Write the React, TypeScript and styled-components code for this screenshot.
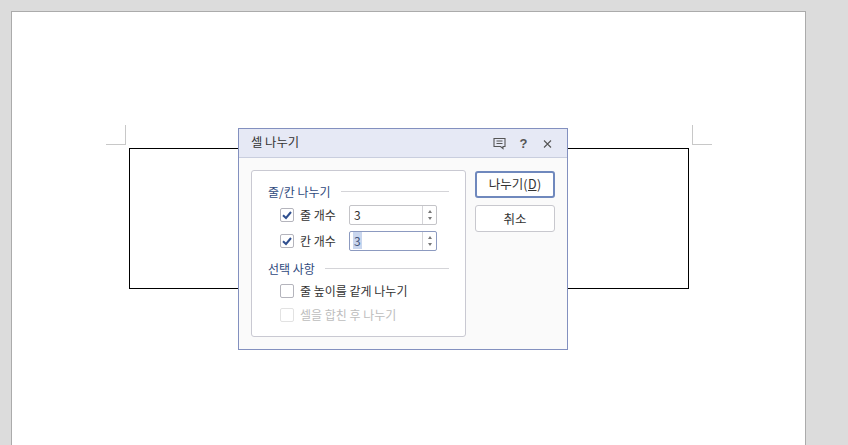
import styled, { createGlobalStyle } from "styled-components";

const colors = {
  desk: "#dcdcdc",
  pageEdge: "#ababab",
  crop: "#c8c8c8",
  frame: "#8390bf",
  titleBg: "#e6e9f5",
  titleLine: "#c9cede",
  bodyBg: "#fafafa",
  panelLine: "#c9c9d2",
  heading: "#2f4a7d",
  text: "#333333",
  muted: "#bdbdbd",
  focus: "#6f88bd",
};

const GlobalStyle = createGlobalStyle`
  html, body {
    margin: 0;
    padding: 0;
    height: 445px;
    overflow: hidden;
    background: ${colors.desk};
  }
  * {
    box-sizing: border-box;
  }
`;

const Desk = styled.div`
  position: relative;
  width: 848px;
  height: 445px;
  padding: 11px 0 0 11px;
  overflow: hidden;
  font-family: "Noto Sans CJK KR", "Noto Sans", sans-serif;
  font-size: 12px;
  color: ${colors.text};
`;

const Page = styled.div`
  width: 795px;
  height: 450px;
  padding: 136px 0 0 117px;
  background: #fff;
  border: 1px solid ${colors.pageEdge};
  border-bottom: none;
`;

const TableBox = styled.div`
  position: relative;
  width: 560px;
  height: 141px;
  border: 1px solid #000;
`;

const CropMark = styled.span<{ $side: "left" | "right" }>`
  position: absolute;
  top: -24px;
  width: 20px;
  height: 20px;
  border-bottom: 1px solid ${colors.crop};
  ${(p) =>
    p.$side === "left"
      ? `left: -24px; border-right: 1px solid ${colors.crop};`
      : `right: -24px; border-left: 1px solid ${colors.crop};`}
`;

const Dialog = styled.div`
  position: absolute;
  left: 238px;
  top: 128px;
  width: 330px;
  height: 222px;
  display: flex;
  flex-direction: column;
  background: ${colors.bodyBg};
  border: 1px solid ${colors.frame};
`;

const TitleBar = styled.div`
  height: 29px;
  display: flex;
  align-items: center;
  padding: 0 13px 0 12px;
  background: ${colors.titleBg};
  border-bottom: 1px solid ${colors.titleLine};
`;

const Title = styled.div`
  flex: 1;
  margin-top: -2px;
  font-size: 12.3px;
  color: #333;
`;

const TitleIcons = styled.div`
  display: flex;
  align-items: center;
  gap: 11px;
`;

const TitleIcon = styled.svg`
  display: block;
  width: 13px;
  height: 13px;
  fill: none;
  stroke: #555;
  stroke-width: 1.1;
`;

const HelpMark = styled.span`
  width: 13px;
  text-align: center;
  font-family: "Liberation Sans", sans-serif;
  font-size: 13px;
  font-weight: 700;
  line-height: 13px;
  color: #555;
`;

const DialogBody = styled.div`
  flex: 1;
  display: flex;
  gap: 9px;
  padding: 12px;
`;

const Panel = styled.div`
  width: 215px;
  height: 167px;
  padding: 11px 16px 0 16px;
  background: #fff;
  border: 1px solid ${colors.panelLine};
  border-radius: 3px;
`;

const GroupTitle = styled.div<{ $spaced?: boolean }>`
  display: flex;
  align-items: center;
  gap: 10px;
  height: 18px;
  margin-top: ${(p) => (p.$spaced ? "5px" : "0")};
  margin-bottom: 2px;
  font-size: 12px;
  color: ${colors.heading};

  &::after {
    content: "";
    flex: 1;
    height: 1px;
    background: #d4d4d8;
  }
`;

const Row = styled.div<{ $tall?: boolean }>`
  display: flex;
  align-items: center;
  height: ${(p) => (p.$tall ? "24px" : "26px")};
  padding-left: 12px;
`;

const Box = styled.span<{ $disabled?: boolean }>`
  width: 14px;
  height: 14px;
  flex: none;
  display: flex;
  align-items: center;
  justify-content: center;
  background: #fff;
  border: 1px solid ${(p) => (p.$disabled ? "#e2e2e2" : "#b4b4bc")};
  border-radius: 2px;
`;

const CheckMark = styled.svg`
  width: 10px;
  height: 10px;
  fill: none;
  stroke: #2f4f8f;
  stroke-width: 2;
`;

const RowLabel = styled.span<{ $disabled?: boolean }>`
  margin: -1px 0 0 6px;
  font-size: 12px;
  color: ${(p) => (p.$disabled ? colors.muted : colors.text)};
`;

const Spinner = styled.div<{ $focused?: boolean }>`
  width: 88px;
  height: 20px;
  margin-left: auto;
  margin-right: 12px;
  display: flex;
  background: #fff;
  border: 1px solid ${(p) => (p.$focused ? "#8c9ac0" : "#c4c4c8")};
  border-radius: 2px;
`;

const SpinValue = styled.div`
  flex: 1;
  padding-left: 3px;
  font-size: 12px;
  line-height: 18px;
`;

const Selected = styled.span<{ $on?: boolean }>`
  padding: 0 1px;
  background: ${(p) => (p.$on ? "#c9d6ee" : "transparent")};
  color: ${(p) => (p.$on ? "#44557a" : colors.text)};
`;

const SpinArrows = styled.div`
  width: 14px;
  display: flex;
  flex-direction: column;
  align-items: center;
  justify-content: space-around;
  padding: 2px 0;
  border-left: 1px solid #d4d4d8;
`;

const Arrow = styled.span<{ $down?: boolean }>`
  width: 0;
  height: 0;
  border-left: 2.5px solid transparent;
  border-right: 2.5px solid transparent;
  ${(p) =>
    p.$down
      ? "border-top: 3px solid #777;"
      : "border-bottom: 3px solid #777;"}
`;

const Buttons = styled.div`
  display: flex;
  flex-direction: column;
  gap: 7px;
  padding-top: 1px;
`;

const Button = styled.button<{ $primary?: boolean }>`
  width: 80px;
  height: 27px;
  padding: 0 0 ${(p) => (p.$primary ? "3px" : "1px")};
  font-family: inherit;
  font-size: 12.5px;
  color: ${colors.text};
  background: #fff;
  border: ${(p) =>
    p.$primary ? `2px solid ${colors.focus}` : "1px solid #c8c8ce"};
  border-radius: 3px;

  u {
    padding: 0 0.5px;
    text-underline-offset: 1px;
  }
`;

const Check = () => (
  <CheckMark viewBox="0 0 10 10">
    <path d="M1 5.2 L4 8 L9 2" />
  </CheckMark>
);

const Stepper = ({ focused }: { focused?: boolean }) => (
  <Spinner $focused={focused}>
    <SpinValue>
      <Selected $on={focused}>3</Selected>
    </SpinValue>
    <SpinArrows>
      <Arrow />
      <Arrow $down />
    </SpinArrows>
  </Spinner>
);

export default function App() {
  return (
    <Desk>
      <GlobalStyle />
      <Page>
        <TableBox>
          <CropMark $side="left" />
          <CropMark $side="right" />
        </TableBox>
      </Page>

      <Dialog>
        <TitleBar>
          <Title>셀 나누기</Title>
          <TitleIcons>
            <TitleIcon viewBox="0 0 13 13">
              <path d="M1 1.5h11v8h-2v2l-2.5-2H1z" />
              <path d="M3.5 4h6M3.5 6.5h6" />
            </TitleIcon>
            <HelpMark>?</HelpMark>
            <TitleIcon viewBox="0 0 13 13">
              <path d="M3 3.5l7 7M10 3.5l-7 7" />
            </TitleIcon>
          </TitleIcons>
        </TitleBar>

        <DialogBody>
          <Panel>
            <GroupTitle>줄/칸 나누기</GroupTitle>
            <Row>
              <Box>
                <Check />
              </Box>
              <RowLabel>줄 개수</RowLabel>
              <Stepper />
            </Row>
            <Row>
              <Box>
                <Check />
              </Box>
              <RowLabel>칸 개수</RowLabel>
              <Stepper focused />
            </Row>
            <GroupTitle $spaced>선택 사항</GroupTitle>
            <Row $tall>
              <Box />
              <RowLabel>줄 높이를 같게 나누기</RowLabel>
            </Row>
            <Row $tall>
              <Box $disabled />
              <RowLabel $disabled>셀을 합친 후 나누기</RowLabel>
            </Row>
          </Panel>

          <Buttons>
            <Button $primary>
              나누기(<u>D</u>)
            </Button>
            <Button>취소</Button>
          </Buttons>
        </DialogBody>
      </Dialog>
    </Desk>
  );
}
